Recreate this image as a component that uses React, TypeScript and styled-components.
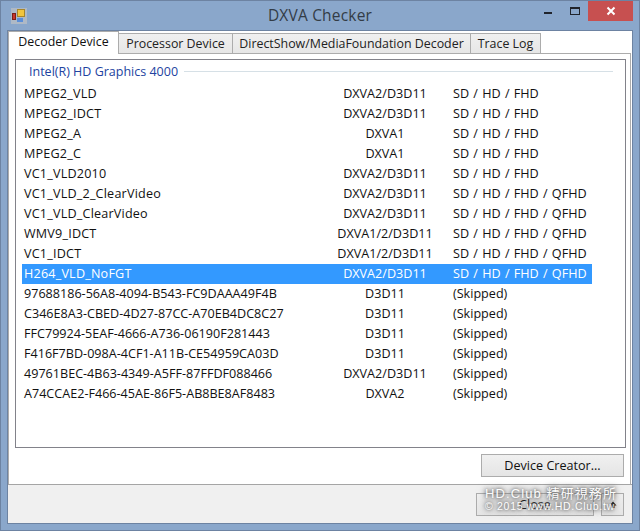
import React from "react";
import styled, { createGlobalStyle } from "styled-components";

const Global = createGlobalStyle`
  html, body { margin: 0; padding: 0; width: 640px; height: 531px; overflow: hidden; }
  * { box-sizing: border-box; }
`;
const Win = styled.div`
  position: relative; width: 640px; height: 531px; background: #8aa7cb; border: 1px solid #6d83a2;
  display: flex; flex-direction: column; font: 12.6px "Open Sans", sans-serif; color: #111;
`;
const TitleBar = styled.div`
  height: 29px; flex: none; display: flex; align-items: flex-start; padding-left: 10px;
`;
const AppIcon = styled.svg`
  width: 16px; height: 16px; margin-top: 7px; flex: none;
`;
const Title = styled.div`
  flex: 1; text-align: center; font-size: 15.5px; color: #333c46; margin-top: 3px; letter-spacing: 0.2px; padding-left: 78px;
`;
const Controls = styled.div`
  display: flex; margin-right: 6px; flex: none;
`;
const Ctl = styled.div<{ $w: number; $red?: boolean }>`
  width: ${p => p.$w}px; height: 20px; display: flex; align-items: center; justify-content: center;
  background: ${p => (p.$red ? "#c75050" : "transparent")};
`;
const Client = styled.div`
  flex: 1; margin: 0 6px 6px 6px; background: #f0f0f0; border: 1px solid #6d83a2;
  display: flex; flex-direction: column; min-height: 0;
`;
const Top = styled.div`
  height: 454px; flex: none; background: #fff; display: flex; flex-direction: column;
  border-bottom: 1px solid #a5a5a5;
`;
const TabRow = styled.div`
  height: 23px; flex: none; display: flex; align-items: flex-end; background: #fff; font-size: 12.4px;
`;
const Tab = styled.div<{ $w: number; $on?: boolean }>`
  width: ${p => p.$w}px; height: ${p => (p.$on ? 23 : 21)}px; flex: none; text-align: center;
  line-height: 19px;
  margin-right: -1px;
  background: ${p => (p.$on ? "#fff" : "linear-gradient(#f0f0f0,#e6e6e6)")};
  border: 1px solid #acacac; border-bottom: ${p => (p.$on ? "none" : "1px solid #acacac")};
  color: ${p => (p.$on ? "#111" : "#222")};
  position: relative; z-index: ${p => (p.$on ? 1 : 0)};
  white-space: nowrap;
`;
const Panel = styled.div`
  flex: 1; min-height: 0; border: 1px solid #acacac; border-top: none; border-bottom: none; margin-right: 1px;
  padding: 5px 4px 0 6px; display: flex; flex-direction: column; position: relative; background: #fff;
`;
const PanelTopLine = styled.div`
  position: absolute; left: 109px; right: -1px; top: -1px; height: 1px; background: #acacac;
`;
const ListBox = styled.div`
  height: 389px; flex: none; border: 1px solid #82828a; padding: 0 0 0 6px; display: flex; flex-direction: column;
`;
const GroupHead = styled.div`
  height: 24px; display: flex; align-items: center; gap: 6px; padding: 0 12px 2px 7px; color: #2243a0; flex: none; font-size: 12.5px;
`;
const GroupLine = styled.div`
  flex: 1; height: 1px; background: #d6e0e6; margin-top: 1px;
`;
const Row = styled.div<{ $sel?: boolean }>`
  width: 570px; height: 20px; flex: none; display: grid; grid-template-columns: 296px 130px 1fr; align-items: center;
  padding: 0 0 2px 2px; background: ${p => (p.$sel ? "#3399ff" : "transparent")}; color: ${p => (p.$sel ? "#fff" : "#111")};
  white-space: nowrap;
`;
const Name = styled.span<{ $guid?: boolean }>`
  letter-spacing: ${p => (p.$guid ? 0 : 0.2)}px;
`;
const Api = styled.span`
  text-align: center; justify-self: center;
`;
const Res = styled.span`
  padding-left: 3px; word-spacing: 1px;
`;
const ActionRow = styled.div`
  display: flex; justify-content: flex-end; padding-right: 2px; margin-top: 6px; flex: none;
`;
const Btn = styled.div<{ $w: number }>`
  width: ${p => p.$w}px; height: 23px; flex: none; border: 1px solid #acacac; background: linear-gradient(#f0f0f0,#e5e5e5);
  display: flex; align-items: center; justify-content: center; color: #111; font-size: 12.6px;
`;
const Bottom = styled.div`
  flex: 1; display: flex; justify-content: flex-end; align-items: flex-start; gap: 7px; padding: 8px 8px 0 0;
`;
const Watermark = styled.div`
  position: absolute; left: 484px; top: 486px; width: 136px; color: #fff; line-height: 1;
  text-shadow: 0 0 3px #666, 0 0 5px #666, 0 0 8px #777; font-family: "Liberation Sans", "Noto Sans CJK TC", sans-serif;
  white-space: nowrap;
`;
const WmTop = styled.div`
  font-size: 13px; letter-spacing: 1.1px; opacity: .95;
`;
const WmBot = styled.div`
  font-size: 10.5px; margin-top: 1px; letter-spacing: .7px; opacity: .95;
`;

const rows: [string, string, string][] = [
  ["MPEG2_VLD", "DXVA2/D3D11", "SD / HD / FHD"],
  ["MPEG2_IDCT", "DXVA2/D3D11", "SD / HD / FHD"],
  ["MPEG2_A", "DXVA1", "SD / HD / FHD"],
  ["MPEG2_C", "DXVA1", "SD / HD / FHD"],
  ["VC1_VLD2010", "DXVA2/D3D11", "SD / HD / FHD"],
  ["VC1_VLD_2_ClearVideo", "DXVA2/D3D11", "SD / HD / FHD / QFHD"],
  ["VC1_VLD_ClearVideo", "DXVA2/D3D11", "SD / HD / FHD / QFHD"],
  ["WMV9_IDCT", "DXVA1/2/D3D11", "SD / HD / FHD / QFHD"],
  ["VC1_IDCT", "DXVA1/2/D3D11", "SD / HD / FHD / QFHD"],
  ["H264_VLD_NoFGT", "DXVA2/D3D11", "SD / HD / FHD / QFHD"],
  ["97688186-56A8-4094-B543-FC9DAAA49F4B", "D3D11", "(Skipped)"],
  ["C346E8A3-CBED-4D27-87CC-A70EB4DC8C27", "D3D11", "(Skipped)"],
  ["FFC79924-5EAF-4666-A736-06190F281443", "D3D11", "(Skipped)"],
  ["F416F7BD-098A-4CF1-A11B-CE54959CA03D", "D3D11", "(Skipped)"],
  ["49761BEC-4B63-4349-A5FF-87FFDF088466", "DXVA2/D3D11", "(Skipped)"],
  ["A74CCAE2-F466-45AE-86F5-AB8BE8AF8483", "DXVA2", "(Skipped)"],
];

export default function App() {
  return (
    <Win>
      <Global />
      <TitleBar>
        <AppIcon viewBox="0 0 16 16">
          <rect x="0" y="0" width="16" height="16" fill="#aeb9c6" />
          <rect x="6.5" y="1.5" width="7" height="7" fill="#f2c53d" stroke="#a8862a" />
          <rect x="1.5" y="5.5" width="3" height="6" fill="#c8352b" stroke="#7c2019" />
          <rect x="6" y="10" width="6" height="4" fill="#5b8fd9" />
        </AppIcon>
        <Title>DXVA Checker</Title>
        <Controls>
          <Ctl $w={26}>
            <svg width="10" height="10" viewBox="0 0 10 10"><rect x="1" y="6" width="8" height="2" fill="#20242c" /></svg>
          </Ctl>
          <Ctl $w={27}>
            <svg width="12" height="10" viewBox="0 0 12 10"><rect x="1.5" y="1.5" width="9" height="7" fill="none" stroke="#20242c" strokeWidth="1" /><rect x="1" y="1" width="10" height="2" fill="#20242c" /></svg>
          </Ctl>
          <Ctl $w={45} $red>
            <svg width="10" height="10" viewBox="0 0 10 10"><path d="M1.5 1.5L8.5 8.5M8.5 1.5L1.5 8.5" stroke="#fff" strokeWidth="2" /></svg>
          </Ctl>
        </Controls>
      </TitleBar>
      <Client>
        <Top>
          <TabRow>
            <Tab $w={111} $on>Decoder Device</Tab>
            <Tab $w={115}>Processor Device</Tab>
            <Tab $w={239}>DirectShow/MediaFoundation Decoder</Tab>
            <Tab $w={71}>Trace Log</Tab>
          </TabRow>
          <Panel>
            <PanelTopLine />
            <ListBox>
              <GroupHead>Intel(R) HD Graphics 4000<GroupLine /></GroupHead>
              {rows.map(r => (
                <Row key={r[0]} $sel={r[0] === "H264_VLD_NoFGT"}>
                  <Name $guid={r[2] === "(Skipped)"}>{r[0]}</Name>
                  <Api>{r[1]}</Api>
                  <Res>{r[2]}</Res>
                </Row>
              ))}
            </ListBox>
            <ActionRow><Btn $w={143}>Device Creator...</Btn></ActionRow>
          </Panel>
        </Top>
        <Bottom>
          <Btn $w={118}>Close</Btn>
          <Btn $w={23}>
            <svg width="8" height="8" viewBox="0 0 8 8"><path d="M4 0.5L7.5 4.5H5.5V7H2.5V4.5H0.5Z" fill="#111" /></svg>
          </Btn>
        </Bottom>
      </Client>
      <Watermark>
        <WmTop>HD.Club 精研視務所</WmTop>
        <WmBot>© 2015 www.HD.Club.tw</WmBot>
      </Watermark>
    </Win>
  );
}
